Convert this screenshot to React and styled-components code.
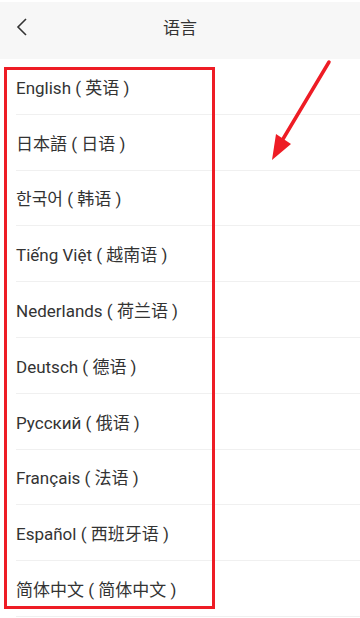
import React from "react";
import styled, { createGlobalStyle } from "styled-components";

const Global = createGlobalStyle`
  html, body { margin: 0; padding: 0; background: #fff; }
  body { font-family: Roboto, "Noto Sans CJK SC", sans-serif; }
`;

const Page = styled.div`
  position: relative;
  width: 360px;
  height: 618px;
  overflow: hidden;
  background: #fff;
`;

const Header = styled.header`
  height: 57px;
  margin-top: 2px;
  background: #f7f7f7;
  display: flex;
  align-items: center;
  justify-content: center;
  position: relative;
  padding-bottom: 8px;
  box-sizing: border-box;
`;

const Back = styled.button`
  position: absolute;
  left: 12px;
  top: 11px;
  width: 20px;
  height: 28px;
  border: 0;
  background: none;
  padding: 0;
  display: flex;
  align-items: center;
  justify-content: center;
`;

const Title = styled.h1`
  margin: 0;
  font-size: 17px;
  font-weight: 400;
  color: #333;
`;

const List = styled.ul`
  list-style: none;
  margin: 0;
  padding: 0 0 0 16px;
`;

const Item = styled.li`
  height: 55.8px;
  display: flex;
  align-items: center;
  font-size: 17px;
  color: #333;
  border-bottom: 1px solid #f0f0f0;
  box-sizing: border-box;
`;

const Highlight = styled.div`
  position: absolute;
  left: 4px;
  top: 67px;
  width: 211px;
  height: 542px;
  border: 3.5px solid #ee1c25;
  box-sizing: border-box;
  pointer-events: none;
`;

const Arrow = styled.svg`
  position: absolute;
  left: 0;
  top: 0;
  pointer-events: none;
`;

const langs = [
  "English ( 英语 )",
  "日本語 ( 日语 )",
  "한국어 ( 韩语 )",
  "Tiếng Việt ( 越南语 )",
  "Nederlands ( 荷兰语 )",
  "Deutsch ( 德语 )",
  "Русский ( 俄语 )",
  "Français ( 法语 )",
  "Español ( 西班牙语 )",
  "简体中文 ( 简体中文 )",
];

export default function App() {
  return (
    <Page>
      <Global />
      <Header>
        <Back aria-label="back">
          <svg width="12" height="18" viewBox="0 0 12 18">
            <path d="M10 1 L2 9 L10 17" fill="none" stroke="#333" strokeWidth="1.6" />
          </svg>
        </Back>
        <Title>语言</Title>
      </Header>
      <List>
        {langs.map((l) => (
          <Item key={l}>{l}</Item>
        ))}
      </List>
      <Highlight />
      <Arrow width="360" height="618" viewBox="0 0 360 618">
        <line x1="329" y1="62" x2="283" y2="139" stroke="#ee1c25" strokeWidth="3.5" strokeLinecap="round" />
        <polygon points="272,160 276,134 291,144" fill="#ee1c25" />
      </Arrow>
    </Page>
  );
}
